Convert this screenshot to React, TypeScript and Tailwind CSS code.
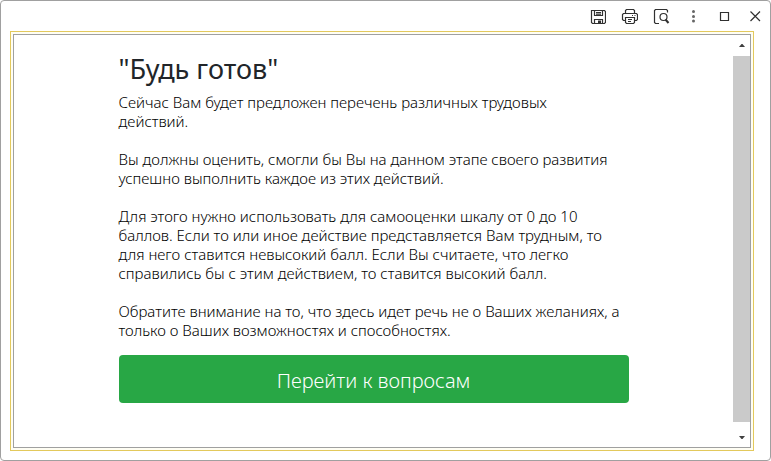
import React from 'react';

const paragraphs = [
  'Сейчас Вам будет предложен перечень различных трудовых\nдействий.',
  'Вы должны оценить, смогли бы Вы на данном этапе своего развития успешно выполнить каждое из этих действий.',
  'Для этого нужно использовать для самооценки шкалу от 0 до 10 баллов. Если то или иное действие представляется Вам трудным, то для него ставится невысокий балл. Если Вы считаете, что легко справились бы с этим действием, то ставится высокий балл.',
  'Обратите внимание на то, что здесь идет речь не о Ваших желаниях, а только о Ваших возможностях и способностях.',
];

const iconProps = {
  width: 18,
  height: 18,
  viewBox: '0 0 18 18',
  fill: 'none',
  stroke: 'currentColor',
  strokeWidth: 1.2,
};

const SaveIcon = () => (
  <svg {...iconProps}>
    <path d="M3.5 3.5h13l1 1v11l-1 1h-12l-1-1z" />
    <path d="M6.5 3.500v5h8v-5M8 5.500h5M8 7.200h5" />
    <path d="M6.500 16.500v-4h8v4" />
    <path d="M10 13.500h3v3h-3z" fill="currentColor" stroke="none" />
  </svg>
);

const PrintIcon = () => (
  <svg {...iconProps}>
    <path d="M5.500 6.500v-3l1-1h7l1 1v3" />
    <path d="M5.500 13.500h-2l-1-1v-5l1-1h13l1 1v5l-1 1h-2" />
    <path d="M5.500 10.500h9v5l-1 1h-7l-1-1zM8 12.500h4M8 14.500h3M12 8.500h1M14.500 8.500h1" />
  </svg>
);

const PreviewIcon = () => (
  <svg {...iconProps}>
    <path d="M7 16.500H3.500l-1-1v-12l1-1h11l1 1v2" />
    <circle cx="11.500" cy="10" r="3.500" />
    <path d="M13.500 12.500l3 3.500" strokeWidth="2" />
  </svg>
);

const DotsIcon = () => (
  <svg {...iconProps} fill="#666" stroke="none">
    <circle cx="9.500" cy="4.500" r="1.500" />
    <circle cx="9.500" cy="9.500" r="1.500" />
    <circle cx="9.500" cy="14" r="1.500" />
  </svg>
);

const MaximizeIcon = () => (
  <svg {...iconProps}>
    <path d="M5.500 5.500h8v8h-8z" />
  </svg>
);

const CloseIcon = () => (
  <svg {...iconProps}>
    <path d="M4.500 4.500l9.500 9.500M14 4.500L4.500 14" />
  </svg>
);

const actions = [
  { label: 'Сохранить', Icon: SaveIcon },
  { label: 'Печать', Icon: PrintIcon },
  { label: 'Просмотр', Icon: PreviewIcon },
];

const controls = [
  { label: 'Меню', Icon: DotsIcon },
  { label: 'Развернуть', Icon: MaximizeIcon },
  { label: 'Закрыть', Icon: CloseIcon },
];

const ScrollBar = () => (
  <div className="w-[17px] shrink-0 flex flex-col text-[#404040]">
    <button aria-label="Вверх" className="h-[21px] flex items-center justify-center">
      <svg width="6" height="3" viewBox="0 0 6 3" fill="currentColor">
        <path d="M0 3L2.500 0h1L6 3z" />
      </svg>
    </button>
    <div className="flex-1 bg-[#cacaca]" />
    <button aria-label="Вниз" className="h-[25px] pt-1.5 flex items-center justify-center">
      <svg width="6" height="3" viewBox="0 0 6 3" fill="currentColor">
        <path d="M0 0L2.500 3h1L6 0z" />
      </svg>
    </button>
  </div>
);

const App = () => {
  return (
    <div className="min-h-screen flex flex-col bg-white border border-[#a0a0a0] rounded font-['Noto_Sans','Open_Sans',sans-serif] text-[#212529]">
      {/* Title bar */}
      <header className="h-[30px] flex justify-end text-[#303030]">
        {actions.map(({ label, Icon }) => (
          <button key={label} aria-label={label} className="w-8 flex items-center justify-center">
            <Icon />
          </button>
        ))}
        {controls.map(({ label, Icon }) => (
          <button key={label} aria-label={label} className="w-[31px] flex items-center justify-center">
            <Icon />
          </button>
        ))}
      </header>

      {/* Form frame */}
      <main className="flex-1 flex ml-[9px] mr-4 mb-[9px] p-0.5 bg-[#fffef4] border border-[#e3c95c]">
        <div className="flex-1 flex bg-white border border-[#a0a0a0]">
          <div className="flex-1 px-4 pt-4">
            <div className="max-w-[510px] mx-auto">
              <h1 className="text-[27px] leading-9 mb-1.5">"Будь готов"</h1>
              <div className="text-[15px] leading-[19px] space-y-[19px] font-light whitespace-pre-line text-black">
                {paragraphs.map(text => (
                  <p key={text}>{text}</p>
                ))}
              </div>
              <button className="w-full h-12 mt-[15px] pt-1 rounded bg-[#28a745] text-white text-xl font-light">
                Перейти к вопросам
              </button>
            </div>
          </div>
          <ScrollBar />
        </div>
      </main>
    </div>
  );
};

export default App;
